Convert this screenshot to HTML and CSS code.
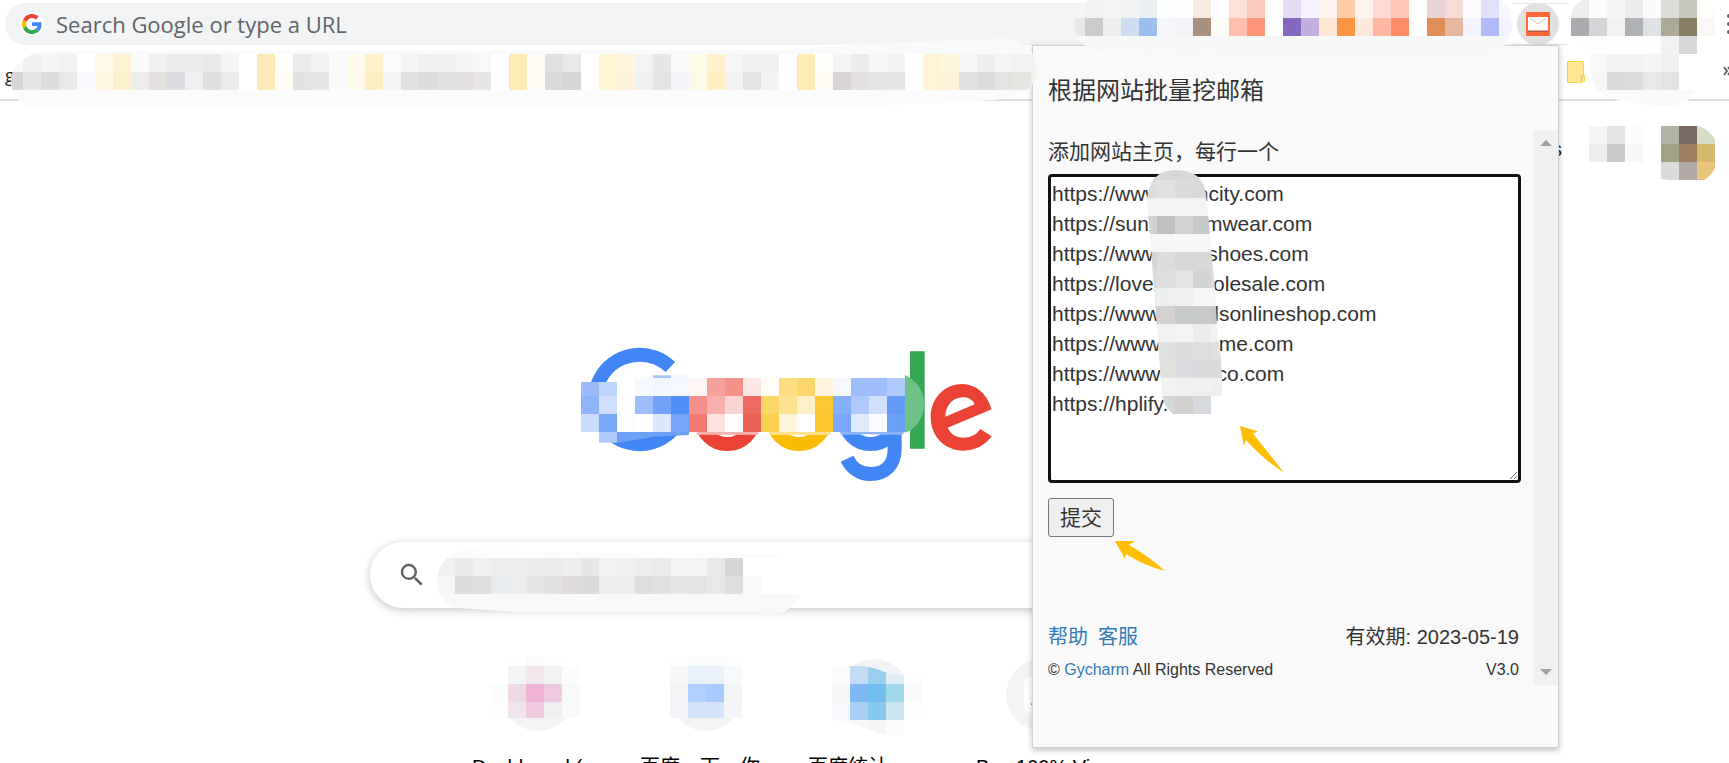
FILE: index.html
```
<!DOCTYPE html>
<html lang="en">
<head>
    <meta charset="UTF-8">
    <meta name="viewport" content="width=device-width, initial-scale=1.0">
    <title>New Tab</title>
    <link rel="stylesheet" href="styles.css">
</head>
<body>
    <header class="toolbar">
        <label class="omnibox">
            <span class="omnibox-icon">
                <svg width="20" height="20" viewBox="0 0 48 48" aria-hidden="true">
                    <path fill="#EA4335" d="M24 9.5c3.54 0 6.71 1.22 9.21 3.6l6.85-6.85C35.9 2.38 30.47 0 24 0 14.62 0 6.51 5.38 2.56 13.22l7.98 6.19C12.43 13.72 17.74 9.5 24 9.5z"/>
                    <path fill="#4285F4" d="M46.98 24.55c0-1.57-.15-3.09-.38-4.55H24v9.02h12.94c-.58 2.96-2.26 5.48-4.78 7.18l7.73 6c4.51-4.18 7.09-10.36 7.09-17.65z"/>
                    <path fill="#FBBC05" d="M10.53 28.59c-.48-1.45-.76-2.99-.76-4.59s.27-3.14.76-4.59l-7.98-6.19C.92 16.46 0 20.12 0 24c0 3.88.92 7.54 2.56 10.78l7.97-6.19z"/>
                    <path fill="#34A853" d="M24 48c6.48 0 11.93-2.13 15.89-5.81l-7.73-6c-2.15 1.45-4.92 2.3-8.16 2.3-6.26 0-11.57-4.22-13.47-9.91l-7.98 6.19C6.51 42.62 14.62 48 24 48z"/>
                </svg>
            </span>
            <input class="omnibox-input" type="text" placeholder="Search Google or type a URL" aria-label="Address bar">
        </label>
        <svg class="mosaic extensions" width="446" height="54" aria-hidden="true">
            <clipPath id="clip-ext"><path d="M22 0H434Q443 8 445 24Q444 54 414 54L40 53Q26 52 16 44Q7 36 7 24Q8 8 22 0z"/></clipPath>
            <g clip-path="url(#clip-ext)">
                <rect width="446" height="54" fill="#f6f7f7"/>
                <g data-y="0" data-fill="#f4f5f5 #eff1f3 #f2f4f4 #f1f3f3 #e9eff3 #fcfdfd #fdfdfd #f7ebdf #fefefe #fde0d8 #fccbbd #fefefe #e4dcf2 #f5f2fb #fff4ed #fccda4 #fff3ee #fddbd3 #fcc9b9 #fdfdfc #e8d4d5 #f5dcd5 #fbfbfe #dfe1fb #f7f8ff"></g>
                <g data-y="18" data-fill="#e6e8ea #cacbcc #eceef0 #cfddf3 #9cbfef #f5f6fa #f2f3f6 #aa917f #fffcf6 #ffbfac #ff9677 #ffffff #8567bd #c1afdd #fde7d4 #fa9641 #fde9dc #ffb7a2 #ff8c66 #ffffff #df8e58 #e4b7a1 #f3f3ff #b1b9f8 #f3f3ff"></g>
            </g>
        </svg>
        <div class="active-extension">
            <button class="extension-button" type="button" aria-label="Mail extension">
                <svg width="24" height="24" viewBox="0 0 24 24">
                    <path fill="#ff6a39" d="M0 0h24v24H0z"/>
                    <path fill="#b9553a" d="M2 6h20v14H2z"/>
                    <path fill="#fff" d="M2 5h20v13.500H2z"/>
                    <path fill="none" stroke="#c3c9bd" d="M4 6l8 6 8-6"/>
                </svg>
            </button>
        </div>
        <svg class="mosaic" width="148" height="54" aria-hidden="true">
            <clipPath id="clip-menu"><path d="M14 0H138Q148 6 148 18V36H129V54H30Q0 46 0 24Q2 8 14 0z"/></clipPath>
            <g clip-path="url(#clip-menu)">
                <rect width="148" height="54" fill="#fdfdfd"/>
                <g data-x="3" data-y="0" data-fill="#ededed #fcfcfc #f4f5f4 #ebebec #fafafa #dcddd7 #c5c6be #fdfdfc"></g>
                <g data-x="3" data-y="18" data-fill="#aaabaf #d4d5d7 #f1f3f2 #afb1b4 #dee2e5 #aca996 #877e63 #f9f8f6"></g>
                <g data-x="93" data-y="36" data-fill="#f1f0f3 #d8d8db"></g>
            </g>
        </svg>
        <svg class="menu-dots" width="13" height="48" aria-hidden="true">
            <g fill="#5f6368"><circle cx="13" cy="16" r="2"/><circle cx="13" cy="24" r="2"/><circle cx="13" cy="32" r="2"/></g>
        </svg>
    </header>

    <nav class="bookmarks">
        <span class="bookmark-text">g</span>
        <svg class="mosaic bookmark-mosaic" width="1026" height="72" aria-hidden="true">
            <clipPath id="clip-bookmarks"><path d="M36 15C15 17 0 30 0 45C0 58 8 66 18 72H824L985 64Q1026 58 1026 34Q1022 4 995 3L900 6L810 11L780 14z"/></clipPath>
            <g clip-path="url(#clip-bookmarks)">
                <rect width="1026" height="72" fill="#fbfbfb"/>
                <rect width="1026" height="18" fill="#f8faf9"/>
                <g data-x="-6" data-y="18" data-fill="#f8f8f8 #f0f0f0 #f5f5f5 #f1f1f0 #ffffff #fef8e4 #fdf3d0 #fafafa #f1eff0 #e9eaec #ebebeb #e7e8ea #f5f5f5 #ffffff #fcebb6 #fffffb #ebebeb #f1f1f1 #f8fafa #fefbed #fdf1ca #fbfbfb #f4f4f4 #efefef #f0f0f0 #f5f3f3 #f8f8f8 #ffffff #fcebb6 #fffcf6 #e0e0e0 #e8e8e8 #ffffff #fef3d3 #fef5dd #f3f3f3 #e6e6e4 #f8f8f9 #fef9e7 #fef0cb #f6f6f6 #f0f0f0 #efefef #ffffff #fcebb6 #fffff9 #f4f4f4 #e9ebed #f6f6f2 #f2f2f2 #ffffff #fef3d3 #fef5dd #f6f6f6 #eeeeee #f3f5f5 #f1f1f1 #f1f1ef"></g>
                <g data-x="-6" data-y="36" data-fill="#d6d6d6 #e7e7e7 #dfdddb #eae9e7 #f7f9fc #fef7e1 #fcefcb #ededee #e4e1e0 #dcdce2 #efeff0 #dfdfdf #ebebeb #ffffff #fcebb6 #fffcf5 #e2e2e2 #e4e5e7 #fafafa #fefbed #fdedc2 #f5f5f5 #e3e1df #dcdcdc #e1e1e1 #e3e0de #e6e6e9 #ffffff #fcebb6 #fffcf6 #dadada #d5d4d6 #ffffff #fef3d3 #fdf2d9 #eff0f0 #e4e4e4 #f3f5f8 #fef9e7 #fdefc1 #f2f2f2 #e3e3e3 #f2f2f2 #ffffff #fcebb6 #fffbf4 #d7d4d8 #e4e1e0 #e3e4e6 #e6e6e6 #ffffff #fef3d3 #fdf2d9 #e4e1e3 #dbdcde #e4e3e2 #e6e5e2 #f1f1ef"></g>
            </g>
        </svg>
        <div class="bookmarks-end">
            <svg class="folder" width="18" height="22" viewBox="0 0 18 22" aria-hidden="true">
                <path fill="#ffe68f" stroke="#f5d24c" d="M.5.5h16v14h1v6h-3v1H.5z"/>
                <path fill="none" stroke="#e9c23a" d="M14.500 20v-5h3"/>
            </svg>
            <svg class="mosaic" width="106" height="52" aria-hidden="true">
                <clipPath id="clip-folder"><path d="M0 0H89V36H106Q98 52 80 52C50 52 20 48 8 36Q-2 20 2 0z"/></clipPath>
                <g clip-path="url(#clip-folder)">
                    <rect width="106" height="52" fill="#fafafa"/>
                    <g data-x="-1" data-y="0" data-fill="#f8f8f9 #f2f2f2 #f2f2f2 #f4f4f4 #efeff1"></g>
                    <g data-x="-1" data-y="18" data-fill="#f6f6f7 #dcdadb #dcdcdb #e6e9e8 #e3e3e3"></g>
                </g>
            </svg>
            <svg class="overflow-mark" width="33" height="36" aria-hidden="true">
                <path fill="none" stroke="#5f6368" stroke-width="2" d="M28 13l3 4-3 4M32 13l3 4-3 4"/>
            </svg>
        </div>
    </nav>

    <main class="page">
        <div class="account">
            <a class="images-link" href="#">Images</a>
            <svg class="mosaic" width="54" height="54" aria-hidden="true">
                <g data-y="0" data-fill="#f5f5f5 #e4e4e4 #fcfcfc"></g>
                <g data-y="18" data-fill="#ebeded #c9cacc #f7f7f7"></g>
            </svg>
            <svg class="mosaic" width="54" height="54" aria-hidden="true">
                <clipPath id="clip-avatar"><path d="M0 0H38Q48 4 54 13V42Q50 50 43 54H8L0 53z"/></clipPath>
                <g clip-path="url(#clip-avatar)">
                    <g data-y="0" data-fill="#b4b4a6 #786964 #d8dbc5"></g>
                    <g data-y="18" data-fill="#a1a282 #9e8060 #d6b96c"></g>
                    <g data-y="36" data-fill="#dbdcda #b1a8a5 #e8c57b"></g>
                </g>
            </svg>
        </div>

        <div class="content">
            <svg class="logo" width="440" height="170" viewBox="0 0 1320 510" role="img" aria-label="Google">
                <g fill="none" stroke-width="42">
                    <path stroke="#4285f4" d="M301 111A134 134 0 1 0 343 207H209"/>
                    <circle stroke="#ea4335" cx="472" cy="262" r="80"/>
                    <circle stroke="#fbbc05" cx="687" cy="262" r="80"/>
                    <circle stroke="#4285f4" cx="902" cy="262" r="80"/>
                    <path stroke="#4285f4" d="M974 180V356C974 404 945 432 901 432C869 432 844 413 831 386"/>
                </g>
                <path fill="#34a853" d="M1020 64h44v292h-44z"/>
                <path fill="#ea4335" fill-rule="evenodd" d="M1265 238C1250 190 1218 162 1176 162C1123 162 1082 205 1082 262C1082 320 1125 362 1180 362C1217 362 1246 345 1265 319L1231 297C1218 315 1202 323 1180 323C1158 323 1142 312 1133 293zM1126 260C1126 227 1148 202 1179 202C1196 202 1209 210 1214 223z"/>
                <path fill="#70c188" d="M1005 135C1040 150 1062 185 1062 222C1062 260 1040 298 1005 308z"/>
                <path fill="#fff" d="M33 157H195V144H1005V313H330L87 306H33z"/>
                <path fill="#6c9ff6" d="M141 306H357V315L250 320L150 338H141z"/>
                <path fill="#afcbfa" d="M87 306h54v32h-54z"/>
                <path fill="#f7b2ad" d="M380 306h185v8H380z"/>
                <path fill="#fde08c" d="M596 306h185v8H596z"/>
                <path fill="#8fb5f9" d="M811 306h190v7H811z"/>
                <path fill="#f2f6fe" d="M195 146L249 136H357V146z"/>
                <path fill="#a9c6fa" d="M249 136h54v8h-54z"/>
                <g transform="translate(33 144) scale(3)">
                    <g data-y="4" data-h="14" data-fill="#9bbcf9 #bdd4fb"></g>
                    <g data-x="54" data-y="0" data-fill="#f5f9ff #f2f6fe #f5f8ff #fff5f5 #f6a19b #f4928a #fce5e4 #fffdf5 #fddc82 #fcd56c #fef4de #f5f8ff #9dbefa #9dbefa #b0cbfb"></g>
                    <g data-y="18" data-fill="#8fb5f9 #cfdffd #ffffff #9dbefa #72a2f7 #5090f6 #f3918a #f6afab #fad4d2 #ee6b61 #fcd768 #fde294 #fef0c8 #f9c834 #85aff8 #aecafb #cfdffc #659af6"></g>
                    <g data-y="36" data-fill="#c9dcfc #78a8f8 #fcfdff #ffffff #dce8fd #76a4f6 #f17b73 #fde1e0 #fefefe #eb6156 #fdd050 #fef4dc #fffffe #fbc62f #7ba8f8 #e1eafc #fafcff #6c9ff6"></g>
                </g>
            </svg>

            <div class="search">
                <svg width="30" height="30" viewBox="0 0 24 24" aria-hidden="true">
                    <path fill="#5f6368" d="M15.500 14h-.79l-.28-.27A6.471 6.471 0 0 0 16 9.500 6.500 6.500 0 1 0 9.500 16c1.610 0 3.090-.59 4.230-1.570l.27.28v.79l5 4.990L20.490 19l-4.990-5zm-6 0C7.010 14 5 11.990 5 9.500S7.010 5 9.500 5 14 7.010 14 9.500 11.990 14 9.500 14z"/>
                </svg>
                <svg class="mosaic" width="366" height="64" aria-hidden="true">
                    <clipPath id="clip-search"><path d="M0 30Q2 8 24 0L90 2L330 4L350 8V44H364Q354 64 335 64L315 62H80L20 58Q0 52 0 30z"/></clipPath>
                    <g clip-path="url(#clip-search)">
                        <rect width="366" height="64" fill="#f8f8f8"/>
                        <rect width="366" height="8" fill="#fcfcfc"/>
                        <rect x="306" y="8" width="60" height="36" fill="#fff"/>
                        <g data-y="8" data-fill="#f0f0f0 #e9e9e9 #efefef #ebedef #ececed #ebebeb #ebebeb #ededed #e6e6e6 #f2f2f2 #f0f0f0 #ececec #eaeaea #f4f4f4 #f3f3f3 #e8e8e8 #d6d6d8"></g>
                        <g data-y="26" data-fill="#f6f6f6 #dddddd #dedede #e9ecee #ececec #e5e5e5 #e1e1e1 #dfdbdc #dadbdc #ededee #ebedef #dfdfdf #e1e1e1 #e7e7ea #e3e3e3 #e8e8e8 #dfdfe1 #f9f9f9"></g>
                    </g>
                </svg>
            </div>

            <div class="shortcuts">
                <a class="shortcut" href="#">
                    <svg class="mosaic" width="72" height="72" aria-hidden="true">
                        <circle cx="36" cy="36" r="36" fill="#f1f3f4"/>
                        <rect x="-12" y="-2" width="90" height="28" fill="#fff"/>
                        <g data-x="6" data-y="-2" data-h="9" data-fill="#fdfefd #fafafc #fdfdfd"></g>
                        <g data-x="6" data-y="7" data-fill="#f1f3f4 #f1e6ec #f0f1f3 #fbfcfc"></g>
                        <g data-x="-12" data-y="25" data-fill="#fbfdfc #eed9e5 #eeb3d5 #efc9df #f7f8f8"></g>
                        <g data-x="-12" data-y="43" data-h="16" data-fill="#fcfdfc #f0e4ec #efc9de #efeff1 #f8f9fb"></g>
                    </svg>
                    <span class="shortcut-label">Dashboard (</span>
                </a>
                <a class="shortcut" href="#">
                    <svg class="mosaic" width="72" height="72" aria-hidden="true">
                        <circle cx="36" cy="36" r="36" fill="#f1f3f4"/>
                        <g data-y="-2" data-h="9" data-fill="#fdfdfd #fafcfb #fafcfb #fdfdfd"></g>
                        <g data-y="7" data-fill="#f5f7f9 #e8f0f9 #ebf1f9 #f6f8fa"></g>
                        <g data-y="25" data-fill="#f1f3f4 #b0cfff #a8cbff #f1f3f4"></g>
                        <g data-y="43" data-h="16" data-fill="#f2f4f7 #d3e3fa #d5e4fa #f3f5f8"></g>
                    </svg>
                    <span class="shortcut-label">百度一下，你</span>
                </a>
                <a class="shortcut" href="#">
                    <svg class="mosaic" width="72" height="72" aria-hidden="true">
                        <circle cx="36" cy="36" r="36" fill="#f1f3f4"/>
                        <clipPath id="clip-stat"><path d="M-6 7H22C42 8 46 16 66 16H84V61H66V77C34 78 30 66 -6 61z"/></clipPath>
                        <path fill="#fff" d="M-6 61H84V78H-6z"/>
                        <g clip-path="url(#clip-stat)">
                            <g data-x="-6" data-y="7" data-fill="#fafbfb #c2dcf4 #9acfee #deedf3 #fdfdfd"></g>
                            <g data-x="-6" data-y="25" data-fill="#f5f7f6 #7fb7f2 #74bdef #a0d9ec #f9fbfa"></g>
                            <g data-x="-6" data-y="43" data-fill="#f7f8fb #a9cff3 #88c8ed #cae5ef #fdfdfd"></g>
                            <g data-x="-6" data-y="61" data-fill="#fafbfb #f6f8f8 #f4f6f6 #fafcfb"></g>
                        </g>
                    </svg>
                    <span class="shortcut-label">百度统计</span>
                </a>
                <a class="shortcut" href="#">
                    <svg width="72" height="72" aria-hidden="true">
                        <circle cx="36" cy="36" r="36" fill="#f1f3f4"/>
                        <rect x="18" y="18" width="36" height="36" rx="6" fill="#fff"/>
                        <path fill="#777" d="M25 46l6-18 6 18z"/>
                    </svg>
                    <span class="shortcut-label">Buy 100% Vi</span>
                </a>
            </div>
        </div>
    </main>

    <aside class="popup" lang="zh-CN">
        <h1 class="popup-title">根据网站批量挖邮箱</h1>
        <div class="popup-body">
            <form class="popup-form">
                <label class="field-label" for="sites">添加网站主页，每行一个</label>
                <div class="field">
                    <textarea class="sites" id="sites" spellcheck="false">https://www.xxxncity.com
https://sunxoooxmwear.com
https://www.xxxxshoes.com
https://lovexxowholesale.com
https://www.xxxxdsonlineshop.com
https://www.xxxwrme.com
https://www.ooxxrco.com
https://hplify.com</textarea>
                    <svg class="mosaic field-mosaic" width="90" height="252" aria-hidden="true">
                        <clipPath id="clip-field"><path d="M8 38Q10 8 37 8Q64 8 67 32L70 62L73 98L76 126L78 162L82 198L83 216V234H72V252H34Q26 246 23 234L19 180L15 126L11 72z"/></clipPath>
                        <g clip-path="url(#clip-field)">
                            <rect width="90" height="18" fill="#d8d8d8"/>
                            <g data-y="18" data-fill="#dcddde #e1e1e1 #dcdbd9 #dad8d8 #dad8d8"></g>
                            <g data-y="36" data-fill="#f2f4f4 #f2f3f3 #f2f3f3 #f2f3f3 #f2f3f3"></g>
                            <g data-y="54" data-fill="#cfd2d3 #bfbfbf #d0d2d4 #c6c8c9 #c6c8c9"></g>
                            <g data-y="72" data-fill="#f6f6f6 #f6f6f6 #f7f7f7 #f6f6f6 #f6f6f6"></g>
                            <g data-y="90" data-fill="#d4d4d3 #dcddde #d7d7d5 #d8d8d7 #d8d8d7"></g>
                            <g data-y="108" data-fill="#dadbdb #dedfe0 #e4e2e3 #d4d4d4 #dddddd"></g>
                            <g data-y="126" data-fill="#eaecea #edefee #eff0f0 #f5f7f6 #f5f7f6"></g>
                            <g data-y="144" data-fill="#d2d0ce #d3d2d1 #c7cbcc #cacaca #c6c6c6"></g>
                            <g data-y="162" data-fill="#eff0f0 #f1f1f1 #f3f3f1 #eaeceb #f1f2f2"></g>
                            <g data-y="180" data-fill="#e0e0df #e0e0df #dcdcda #dedede #e0e0dd"></g>
                            <g data-y="198" data-fill="#e1e1e0 #e1e1e0 #dcdde0 #d9dada #dadad9"></g>
                            <g data-y="216" data-fill="#f0f1f1 #f1f2f2 #f0f0f0 #f0f0f0 #eeeeee"></g>
                            <g data-y="234" data-fill="#d5d8d9 #d5d8d9 #d2d0ce #d6dade"></g>
                        </g>
                    </svg>
                    <svg class="arrow arrow-field" width="44" height="47" aria-hidden="true">
                        <path fill="#ffbf00" d="M0 0L18 5.500L13 7.500Q26 24 44 46.500Q24 34 6 14L4 20z"/>
                    </svg>
                </div>
                <div class="submit-row">
                    <button class="submit" type="button">提交</button>
                    <svg class="arrow arrow-submit" width="50" height="31" aria-hidden="true">
                        <path fill="#ffbf00" d="M0 0H20L14 4Q32 14 50 30Q30 25 11 13L10 18z"/>
                    </svg>
                </div>
                <footer>
                    <div class="info">
                        <span class="info-links"><a href="#">帮助</a><a href="#">客服</a></span>
                        <span>有效期: 2023-05-19</span>
                    </div>
                    <div class="copyright">
                        <span>© <a href="#">Gycharm</a> All Rights Reserved</span>
                        <span>V3.0</span>
                    </div>
                </footer>
            </form>
            <div class="scrollbar" aria-hidden="true">
                <span class="scroll-up"></span>
                <span class="scroll-down"></span>
            </div>
        </div>
    </aside>

    <script src="mosaic.js"></script>
</body>
</html>
```
FILE: styles.css
```
* {
    box-sizing: border-box;
}
body {
    position: relative;
    height: 100vh;
    margin: 0;
    overflow: hidden;
    background-color: #fff;
    color: #202124;
    font-family: "Liberation Sans", "Noto Sans CJK SC", sans-serif;
    font-size: 20px;
}
a {
    color: inherit;
    text-decoration: none;
}
svg {
    display: block;
    flex: none;
}
.mosaic {
    overflow: visible;
}

/* toolbar */
.toolbar {
    display: flex;
    align-items: flex-start;
    height: 48px;
    padding-left: 5px;
}
.omnibox {
    display: flex;
    flex: 1;
    align-items: center;
    gap: 12px;
    height: 42px;
    margin: 3px -24px 0 0;
    padding-left: 15px;
    border-radius: 21px 0 0 21px;
    background-color: #f1f3f4;
}
.omnibox-icon {
    display: flex;
    align-items: center;
    justify-content: center;
    width: 24px;
    height: 24px;
    border-radius: 50%;
    background-color: #fff;
}
.omnibox-input {
    flex: 1;
    padding: 0;
    border: none;
    outline: none;
    background: none;
    font-family: "Open Sans", sans-serif;
    font-size: 22px;
}
.omnibox-input::placeholder {
    color: #5f6368;
    opacity: 1;
}
.extensions {
    position: relative;
    z-index: 3;
}
.active-extension {
    display: flex;
    width: 55px;
    height: 42px;
    margin-top: 3px;
    padding-left: 4px;
    border-top: 1px solid #e6e6e6;
    border-bottom: 1px solid #e6e6e6;
}
.extension-button {
    display: flex;
    align-items: center;
    justify-content: center;
    width: 42px;
    height: 42px;
    margin-top: -1px;
    padding: 0;
    border: none;
    border-radius: 50%;
    background-color: #e1e1e1;
}

/* bookmarks bar */
.bookmarks {
    display: flex;
    align-items: flex-start;
    height: 53px;
    border-bottom: 2px solid #dadce0;
}
.bookmark-text {
    width: 11px;
    padding: 12px 0 0 5px;
    font-family: "Open Sans", sans-serif;
    font-size: 18px;
    line-height: 30px;
}
.bookmark-mosaic {
    position: relative;
    z-index: 3;
    margin-top: -12px;
}
.bookmarks-end {
    display: flex;
    margin: 6px 0 0 auto;
}
.folder {
    margin: 7px 5px 0 0;
}

/* new tab page */
.account {
    display: flex;
    gap: 18px;
    justify-content: flex-end;
    padding: 25px 14px 0 0;
}
.images-link {
    margin-right: 9px;
    line-height: 46px;
}
.content {
    display: flex;
    flex-direction: column;
    align-items: center;
    margin-top: 150px;
    padding-right: 149px;
}
.search {
    display: flex;
    align-items: center;
    gap: 10px;
    width: 840px;
    height: 66px;
    margin-top: 42px;
    padding-left: 27px;
    border-radius: 33px;
    background-color: #fff;
    box-shadow: 0 2px 8px rgba(32, 33, 36, 0.28);
}
.search .mosaic {
    margin-top: 14px;
}
.shortcuts {
    display: flex;
    margin-top: 51px;
}
.shortcut {
    display: flex;
    flex-direction: column;
    align-items: center;
    gap: 21px;
    width: 168px;
}
.shortcut-label {
    width: 132px;
    overflow: hidden;
    color: #000;
    line-height: 30px;
    white-space: nowrap;
}

/* extension popup */
.popup {
    position: absolute;
    top: 45px;
    right: 170px;
    z-index: 2;
    width: 527px;
    padding-bottom: 62px;
    border: 1px solid #d0d0d0;
    background-color: #f9f9f9;
    box-shadow: 0 2px 6px rgba(0, 0, 0, 0.25);
    color: #333;
}
.popup a {
    color: #337ab7;
}
.popup-title {
    margin: 0;
    padding: 28px 15px 22px;
    font-size: 24px;
    font-weight: normal;
    line-height: 34px;
}
.popup-body {
    display: flex;
}
.popup-form {
    flex: 1;
    padding: 7px 12px 0 15px;
}
.field-label {
    display: block;
    margin-bottom: 7px;
    font-size: 21px;
    line-height: 30px;
}
.field {
    position: relative;
}
.sites {
    display: block;
    width: 100%;
    height: 309px;
    margin: 0;
    padding: 2px 1px;
    border: 3px solid #101010;
    border-radius: 4px;
    outline: none;
    background-color: #fff;
    color: #333;
    font-family: "Liberation Sans", sans-serif;
    font-size: 21px;
    line-height: 30px;
}
.field-mosaic {
    position: absolute;
    top: -12px;
    left: 91px;
}
.arrow {
    position: absolute;
}
.arrow-field {
    top: 252px;
    left: 192px;
}
.submit-row {
    position: relative;
    margin: 15px 0 82px;
}
.submit {
    display: block;
    width: 66px;
    height: 39px;
    padding: 0 0 4px;
    border: 1px solid #767676;
    border-radius: 3px;
    background-color: #efefef;
    color: #333;
    font-family: inherit;
    font-size: 21px;
}
.arrow-submit {
    top: 43px;
    left: 67px;
}
.info,
.copyright {
    display: flex;
    justify-content: space-between;
    padding-right: 2px;
}
.info {
    line-height: 36px;
}
.info-links {
    display: flex;
    gap: 10px;
}
.copyright {
    font-size: 16px;
    line-height: 30px;
}
.scrollbar {
    display: flex;
    flex-direction: column;
    align-items: center;
    justify-content: space-between;
    width: 25px;
    padding: 10px 0;
    background-color: #f0f0f0;
}
.scroll-up,
.scroll-down {
    border: 6px solid transparent;
}
.scroll-up {
    border-top: none;
    border-bottom-color: #a0a0a0;
}
.scroll-down {
    border-bottom: none;
    border-top-color: #a0a0a0;
}
```
FILE: mosaic.js
```
// fills each row of a mosaic with 18px cells
document.querySelectorAll('g[data-fill]').forEach(row => {
    const x = Number(row.dataset.x || 0);
    const y = Number(row.dataset.y);
    const height = row.dataset.h || 18;

    row.dataset.fill.split(' ').forEach((color, i) => {
        const cell = document.createElementNS('http://www.w3.org/2000/svg', 'rect');
        cell.setAttribute('x', x + i * 18);
        cell.setAttribute('y', y);
        cell.setAttribute('width', 18);
        cell.setAttribute('height', height);
        cell.setAttribute('fill', color);
        cell.setAttribute('shape-rendering', 'crispEdges');
        row.appendChild(cell);
    });
});
```
